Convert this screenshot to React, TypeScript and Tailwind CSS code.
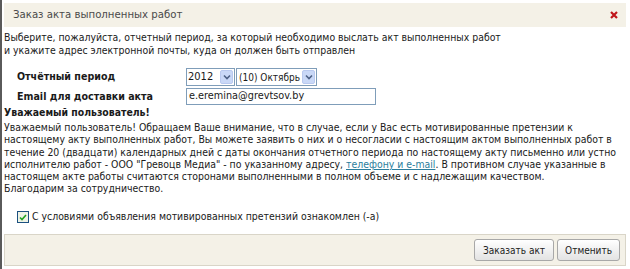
import React from "react";

const F = { fontFamily: '"DejaVu Sans Condensed", "DejaVu Sans", sans-serif' };

function Chevron() {
  return (
    <span className="flex h-[14px] w-[13px] shrink-0 items-center justify-center rounded-[2px] border border-[#b9c9ef] bg-[#c9d8f7]">
      <svg width="8" height="6" viewBox="0 0 8 6">
        <path d="M1 1.5 L4 4.5 L7 1.5" stroke="#4d6185" strokeWidth="1.6" fill="none" />
      </svg>
    </span>
  );
}

export default function App() {
  return (
    <div className="relative h-[269px] w-[630px] overflow-hidden whitespace-nowrap bg-white text-[#1a1a1a]" style={F}>
      <div className="flex h-full flex-col border-l-2 border-[#5a5a5a] pl-[2px]">
        <div className="mt-[3px] mr-[4px] flex h-[24px] shrink-0 items-center justify-between bg-[#f4f1e7] pl-[9px] pr-[8px]">
          <span className="text-[11.3px] text-[#4a4a4a]">Заказ акта выполненных работ</span>
          <svg width="8" height="8" viewBox="0 0 8 8">
            <path d="M1 1 L7 7 M7 1 L1 7" stroke="#c0161b" strokeWidth="2.2" />
          </svg>
        </div>
        <div className="pt-[4px] text-[10.4px] leading-[13px]">
          <p>Выберите, пожалуйста, отчетный период, за который необходимо выслать акт выполненных работ</p>
          <p>и укажите адрес электронной почты, куда он должен быть отправлен</p>
        </div>
        <div className="mt-[11px] grid grid-cols-[169px_1fr] gap-y-[2px] pl-[13px] text-[10.6px]">
          <span className="flex h-[18px] items-center font-bold">Отчётный период</span>
          <div className="flex h-[18px] items-center gap-[1px]">
            <div className="flex h-[18px] w-[49px] items-center justify-between border border-[#7f9db9] bg-white pl-[1px] pr-[1px]">
              <span className="text-[11px]">2012</span>
              <Chevron />
            </div>
            <div className="flex h-[18px] w-[81px] items-center justify-between border border-[#7f9db9] bg-white pl-[2px] pr-[1px]">
              <span className="text-[10px]">(10) Октябрь</span>
              <Chevron />
            </div>
          </div>
          <span className="flex h-[17px] items-center font-bold">Email для доставки акта</span>
          <div className="flex h-[17px] w-[190px] items-center border border-[#7f9db9] bg-white pl-[2px] text-[10.8px]">
            e.eremina@grevtsov.by
          </div>
        </div>
        <div className="mt-[1px] text-[10.4px] leading-[12.2px]">
          <p className="font-bold">Уважаемый пользователь!</p>
          <p className="mt-[3px]">
            Уважаемый пользователь! Обращаем Ваше внимание, что в случае, если у Вас есть мотивированные претензии к
            <br />
            настоящему акту выполненных работ, Вы можете заявить о них и о несогласии с настоящим актом выполненных работ в
            <br />
            течение 20 (двадцати) календарных дней с даты окончания отчетного периода по настоящему акту письменно или устно
            <br />
            исполнителю работ - ООО "Гревоцв Медиа" - по указанному адресу,{" "}
            <span className="text-[#2b7d9c] underline">телефону и e-mail</span>. В противном случае указанные в
            <br />
            настоящем акте работы считаются сторонами выполненными в полном объеме и с надлежащим качеством.
            <br />
            Благодарим за сотрудничество.
          </p>
        </div>
        <div className="mt-[15px] flex items-center gap-[3px] pl-[13px] text-[10.4px]">
          <span className="flex h-[12px] w-[12px] items-center justify-center border border-[#1c5180] bg-[#eef3e6]">
            <svg width="8" height="7" viewBox="0 0 8 7">
              <path d="M1 3.5 L3 5.5 L7 1" stroke="#21a121" strokeWidth="1.6" fill="none" />
            </svg>
          </span>
          <span>С условиями объявления мотивированных претензий ознакомлен (-а)</span>
        </div>
        <div className="mt-[9px] mr-[4px] flex h-[32px] shrink-0 items-center justify-end gap-[3px] border border-[#d9d5c8] bg-[#f4f1e7] pr-[5px]">
          <button className="h-[22px] rounded-[3px] border border-[#a8a8a8] bg-gradient-to-b from-[#ffffff] to-[#e3e3e3] px-[8px] text-[10px] text-[#222]">
            Заказать акт
          </button>
          <button className="h-[22px] rounded-[3px] border border-[#a8a8a8] bg-gradient-to-b from-[#ffffff] to-[#e3e3e3] px-[7px] text-[10px] text-[#222]">
            Отменить
          </button>
        </div>
      </div>
    </div>
  );
}
